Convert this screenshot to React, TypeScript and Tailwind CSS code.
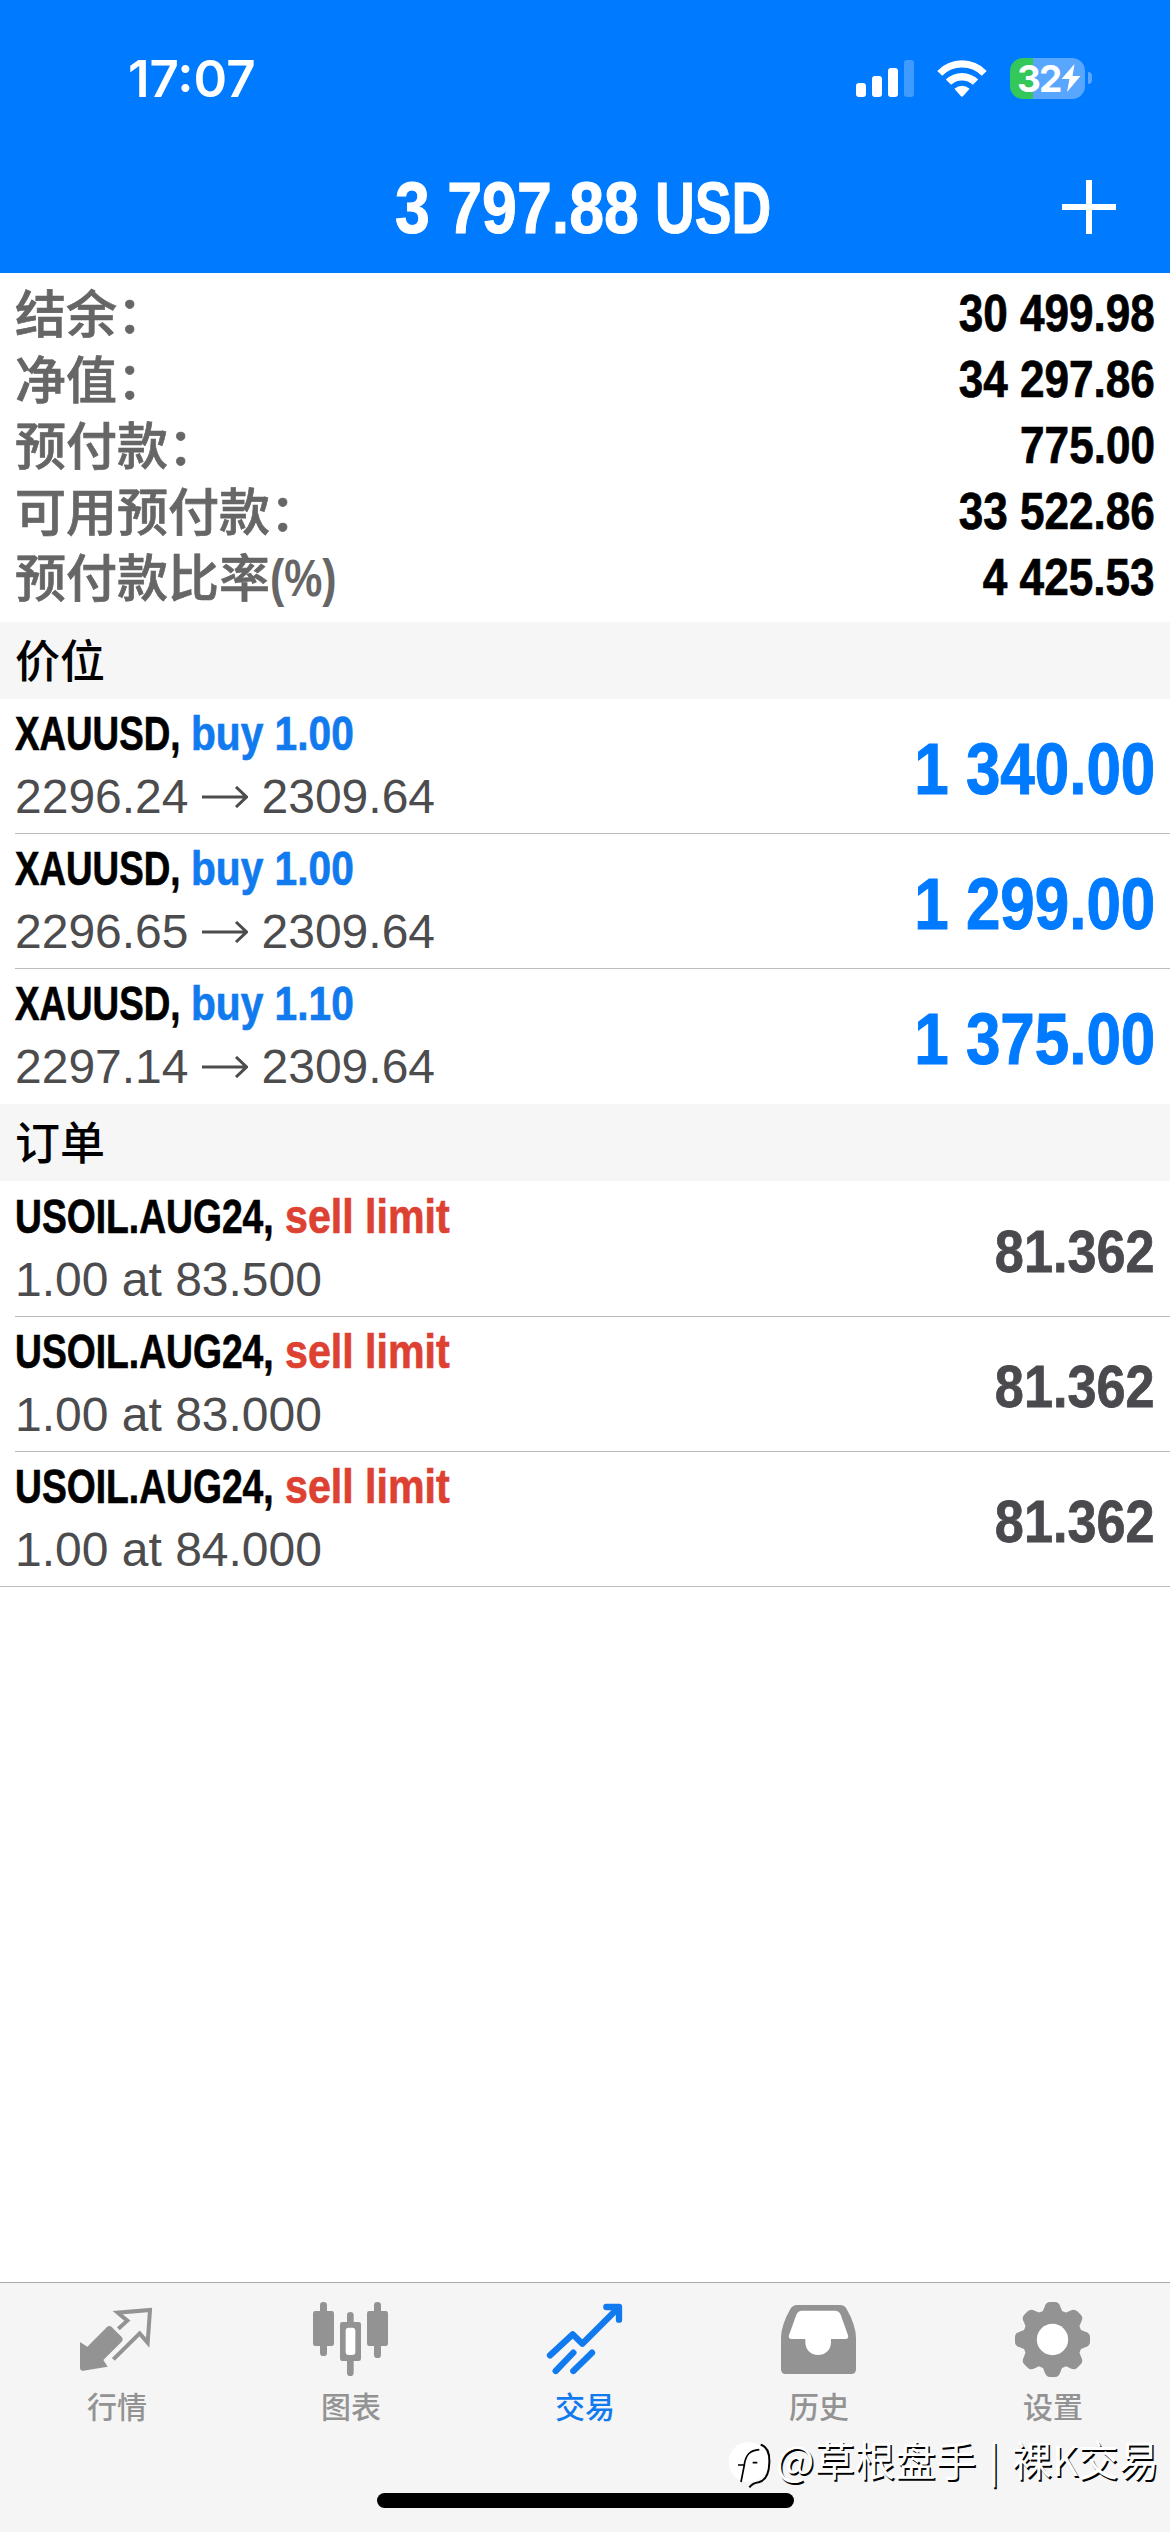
import type { ReactNode } from "react";

const summary = [
  { label: "结余：", value: "30 499.98" },
  { label: "净值：", value: "34 297.86" },
  { label: "预付款：", value: "775.00" },
  { label: "可用预付款：", value: "33 522.86" },
  { label: "预付款比率", suffix: "(%)", value: "4 425.53" },
];

const positions = [
  { volume: "1.00", open: "2296.24", current: "2309.64", profit: "1 340.00" },
  { volume: "1.00", open: "2296.65", current: "2309.64", profit: "1 299.00" },
  { volume: "1.10", open: "2297.14", current: "2309.64", profit: "1 375.00" },
];

const orders = ["83.500", "83.000", "84.000"];

const tabs = [
  { label: "行情", icon: <QuotesIcon />, active: false },
  { label: "图表", icon: <ChartIcon />, active: false },
  { label: "交易", icon: <TradeIcon />, active: true },
  { label: "历史", icon: <HistoryIcon />, active: false },
  { label: "设置", icon: <GearIcon />, active: false },
];

function QuotesIcon() {
  return (
    <svg viewBox="231 90 240 240" className="size-20">
      <path
        d="M240 216 L262 230 L321 171 Q328 165 335 171 L365 201 Q371 208 365 215 L310 270 L323 290 L250 302 Q240 303 240 293 Z"
        fill="currentColor"
      />
      <path
        d="M355 176 L382 152 L353 128 L450 120 L443 218 L419 190 L340 268"
        fill="none"
        stroke="currentColor"
        strokeWidth="12"
      />
    </svg>
  );
}

function ChartIcon() {
  return (
    <svg viewBox="933 90 240 240" className="size-20" fill="currentColor">
      <rect x="939" y="123" width="63" height="105" rx="7" />
      <rect x="960" y="96" width="21" height="162" rx="10" />
      <rect x="1101" y="123" width="63" height="105" rx="7" />
      <rect x="1122" y="96" width="21" height="168" rx="10" />
      <rect x="1041" y="126" width="20" height="50" rx="10" />
      <rect x="1041" y="255" width="20" height="63" rx="10" />
      <rect x="1020" y="156" width="63" height="117" rx="7" />
      <rect x="1037" y="173" width="29" height="82" rx="9" fill="#fff" />
    </svg>
  );
}

function TradeIcon() {
  return (
    <svg
      viewBox="375 90 240 240"
      className="size-20"
      fill="none"
      stroke="currentColor"
      strokeWidth="19"
      strokeLinecap="round"
      strokeLinejoin="round"
    >
      <path d="M390 256 L458 193 L487 221 L592 116" />
      <path d="M559 111 L597 111 L597 149" />
      <path d="M407 303 L460 248" />
      <path d="M460 303 L516 248" />
    </svg>
  );
}

function HistoryIcon() {
  return (
    <svg viewBox="237 90 240 240" className="size-20">
      <path
        d="M292 105 H420 Q434 105 440 117 Q468 166 468 205 V298 Q468 312 454 312 H257 Q243 312 243 298 V205 Q243 166 271 117 Q278 105 292 105 Z"
        fill="currentColor"
      />
      <path
        d="M306 122 H405 Q417 122 422 134 L444 196 Q447 207 436 207 H393 V216 C393 268 316 268 316 216 V207 H275 Q264 207 267 196 L289 134 Q294 122 306 122 Z"
        fill="#fff"
      />
    </svg>
  );
}

function GearIcon() {
  const teeth = [0, 45, 90, 135, 180, 225, 270, 315];
  return (
    <svg viewBox="939 90 240 240" className="size-20" fill="currentColor">
      <circle cx="1057.500" cy="208.500" r="90" />
      {teeth.map((angle) => (
        <path
          key={angle}
          d="M1018 136 Q1030 126 1034 110 Q1038 96 1050 96 H1065 Q1077 96 1081 110 Q1085 126 1097 136 Z"
          transform={`rotate(${angle} 1057.500 208.500)`}
        />
      ))}
      <circle cx="1057.500" cy="208.500" r="47" fill="#fff" />
    </svg>
  );
}

function SignalIcon() {
  return (
    <svg viewBox="0 0 58 37" className="h-[37px] w-[58px]" fill="#fff">
      <rect x="0" y="23" width="10" height="14" rx="3" />
      <rect x="16" y="16" width="10" height="21" rx="3" />
      <rect x="32" y="8" width="10" height="29" rx="3" />
      <rect x="48" y="0" width="10" height="37" rx="3" opacity="0.25" />
    </svg>
  );
}

function WifiIcon() {
  return (
    <svg viewBox="410 86 150 112" className="h-[37px] w-[50px]" fill="#fff">
      <path d="M410 119 Q442 87 485 87 Q528 87 560 119 L545 134 Q520 109 485 109 Q450 109 425 134 Z" />
      <path d="M436 145 Q457 125 485 125 Q513 125 534 145 L518 161 Q504 148 485 148 Q466 148 452 161 Z" />
      <path d="M462 173 Q473 164 485 164 Q497 164 508 173 L488 196 Q485 199 482 196 Z" />
    </svg>
  );
}

function Battery() {
  return (
    <div className="flex items-center gap-[3px]">
      <div className="flex h-[41px] w-[75px] items-center rounded-[13px] bg-[linear-gradient(to_right,#34c759_23px,#59a6ff_23px)] pl-[7px]">
        <span className="w-[44px] font-[Inter,sans-serif] text-[37px] font-bold leading-none tracking-[-2px] text-white">32</span>
        <svg viewBox="0 0 20 28" className="h-[28px] w-[20px]" fill="#fff">
          <path d="M13.500 0 L0.500 15 H8.500 L6 28 L19.500 12 H11.500 Z" />
        </svg>
      </div>
      <div className="h-[12px] w-[4px] rounded-r-full bg-[#59a6ff]" />
    </div>
  );
}

function SectionTitle({ children }: { children: ReactNode }) {
  return (
    <h2 className="h-[77px] bg-[#f6f6f6] pl-[15px] font-['Noto_Sans_CJK_SC',sans-serif] text-[45px] font-medium leading-[74px] text-black">
      {children}
    </h2>
  );
}

export default function App() {
  return (
    <div className="relative flex h-[2532px] w-[1170px] flex-col overflow-hidden bg-white font-['Liberation_Sans','Noto_Sans_CJK_SC',sans-serif]">
      <header className="h-[273px] bg-[#007aff] text-white">
        <div className="flex h-[156px] items-center justify-between pl-[128px] pr-[78px]">
          <span className="font-[Inter,sans-serif] text-[51px] font-semibold leading-none">17:07</span>
          <div className="flex items-center gap-[23px]">
            <SignalIcon />
            <WifiIcon />
            <Battery />
          </div>
        </div>
        <div className="flex h-[102px] items-center pl-[395px] pr-[54px]">
          <h1 className="flex flex-1 pt-[2px] text-[72px] font-bold leading-none [-webkit-text-stroke:1px]">
            <span className="w-[260px] origin-left scale-x-[0.870] whitespace-nowrap">3 797.88</span>
            <span className="origin-left scale-x-[0.765]">USD</span>
          </h1>
          <svg viewBox="0 0 54 54" className="size-[54px]" fill="none" stroke="#fff" strokeWidth="6">
            <path d="M27 0V54M0 27H54" />
          </svg>
        </div>
      </header>

      <dl className="pb-3 pl-[15px] pr-[15px] pt-[7px]">
        {summary.map((row) => (
          <div key={row.label} className="flex h-[66px] items-center justify-between">
            <dt className="flex pb-[5px] text-[51px] leading-[60px] text-[#666]">
              <span className="font-['Noto_Sans_CJK_SC',sans-serif] font-medium [-webkit-text-stroke:0.700px]">{row.label}</span>
              {row.suffix && <span className="origin-left translate-y-[4px] scale-x-[0.840] font-bold">{row.suffix}</span>}
            </dt>
            <dd className="origin-right scale-x-[0.865] pt-px text-[51px] font-bold leading-none text-black [-webkit-text-stroke:0.700px]">
              {row.value}
            </dd>
          </div>
        ))}
      </dl>

      <SectionTitle>价位</SectionTitle>
      <ul>
        {positions.map((item, index) => (
          <li key={item.open} className="flex h-[135px] pl-[15px]">
            <div className={`flex flex-1 items-center justify-between pr-[15px] ${index < 2 ? "border-b border-[#bcbcbe]" : ""}`}>
              <div className="h-full pt-px">
                <div className="flex text-[49px] font-bold leading-[67px] [-webkit-text-stroke:0.700px]">
                  <span className="w-[176px] origin-left scale-x-[0.750] whitespace-nowrap text-black">XAUUSD,</span>
                  <span className="origin-left scale-x-[0.830] whitespace-nowrap text-[#117aee]">buy {item.volume}</span>
                </div>
                <div className="flex items-center text-[48px] leading-[60px] text-[#4c4c4e]">
                  <span>{item.open}</span>
                  <svg viewBox="0 0 46 22" className="ml-[13px] mr-[14px] h-[22px] w-[46px]" fill="none" stroke="currentColor" strokeWidth="3">
                    <path d="M0 11H44M34 1L44.500 11L34 21" />
                  </svg>
                  <span>{item.current}</span>
                </div>
              </div>
              <span className="origin-right scale-x-[0.860] pt-[5px] text-[72px] font-bold leading-none text-[#007aff] [-webkit-text-stroke:1px]">
                {item.profit}
              </span>
            </div>
          </li>
        ))}
      </ul>

      <SectionTitle>订单</SectionTitle>
      <ul className="pt-px">
        {orders.map((price, index) => (
          <li key={price} className={`flex h-[135px] ${index < 2 ? "pl-[15px]" : "border-b border-[#bcbcbe] pl-[15px]"}`}>
            <div className={`flex flex-1 items-center justify-between pr-[15px] ${index < 2 ? "border-b border-[#bcbcbe]" : ""}`}>
              <div className="h-full pt-px">
                <div className="flex text-[49px] font-bold leading-[67px] [-webkit-text-stroke:0.700px]">
                  <span className="w-[270px] origin-left scale-x-[0.760] whitespace-nowrap text-black">USOIL.AUG24,</span>
                  <span className="origin-left scale-x-[0.840] whitespace-nowrap text-[#dd4132]">sell limit</span>
                </div>
                <p className="text-[48px] leading-[60px] text-[#4c4c4e]">1.00 at {price}</p>
              </div>
              <span className="origin-right scale-x-[0.870] pt-[5px] text-[60px] font-bold leading-none text-[#4a4a4e] [-webkit-text-stroke:0.800px]">
                81.362
              </span>
            </div>
          </li>
        ))}
      </ul>

      <nav className="mt-auto grid h-[250px] grid-cols-5 border-t border-[#a9a9ab] bg-[#f5f5f5]">
        {tabs.map((tab) => (
          <div key={tab.label} className={`flex flex-col items-center pt-[17px] ${tab.active ? "text-[#117aee]" : "text-[#939393]"}`}>
            {tab.icon}
            <span className="mt-[7px] font-['Noto_Sans_CJK_SC',sans-serif] text-[30px] font-medium leading-9">{tab.label}</span>
          </div>
        ))}
      </nav>

      <div className="absolute bottom-6 left-[377px] h-[15px] w-[417px] rounded-full bg-black" />

      {/* author watermark over the tab bar */}
      <div className="absolute bottom-[38px] left-[728px] flex items-center">
        <svg viewBox="84 524 132 144" className="h-12 w-11">
          <circle cx="146" cy="590" r="60" fill="#fff" />
          <path d="M123 650 L133 599 H114 M133 597 C138 567 150 555 178 553 M158 592 H172" fill="none" stroke="#000" strokeWidth="5" />
          <path d="M182 538 C204 544 209 564 208 592 C207 624 196 646 176 651 C163 653 156 656 148 666" fill="none" stroke="#000" strokeWidth="6" />
        </svg>
        <span className="ml-[4px] whitespace-nowrap pb-[9px] font-['Noto_Sans_CJK_SC',sans-serif] text-[40.500px] font-normal leading-[52px] text-white [text-shadow:1.500px_1.500px_0_#000] [word-spacing:3px]">
          @草根盘手 | 裸K交易
        </span>
      </div>
    </div>
  );
}
